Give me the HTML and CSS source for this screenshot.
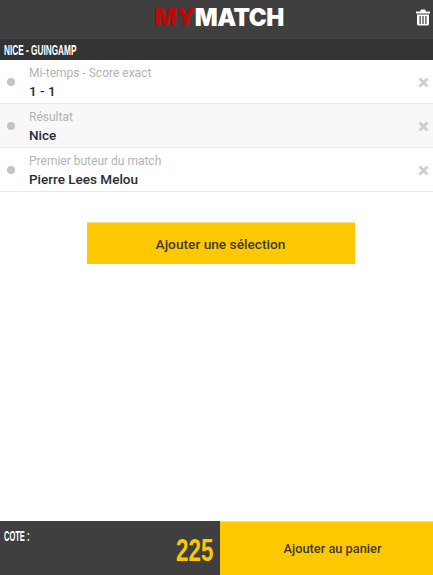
FILE: index.html
```html
<!DOCTYPE html>
<html lang="fr">
<head>
<meta charset="utf-8">
<title>MyMatch</title>
<link rel="stylesheet" href="styles.css">
</head>
<body>
<div class="app">
  <header class="topbar">
    <div class="logo"><span class="logo-my">MY</span>MATCH</div>
    <svg class="trash" viewBox="0 0 14 16" width="14" height="17" aria-hidden="true">
      <path fill="#fff" fill-rule="evenodd" d="M5 0h4l1 2h4v2H0V2h4zM1 5h12v9.500c0 .8-.7 1.500-1.500 1.500h-9C1.700 16 1 15.300 1 14.500zM3.500 6.500v8h1.200v-8zM6.400 6.500v8h1.200v-8zM9.300 6.500v8h1.200v-8z"/>
    </svg>
  </header>
  <div class="match"><span class="cond">NICE - GUINGAMP</span></div>
  <ul class="picks">
    <li class="pick">
      <span class="dot"></span>
      <div class="pick-text"><div class="market">Mi-temps - Score exact</div><div class="choice">1 - 1</div></div>
      <svg class="remove" viewBox="0 0 11 11" width="11" height="11" aria-hidden="true"><path d="M1.500 1.500l8 8M9.500 1.500l-8 8" stroke="#cfcfcf" stroke-width="3" fill="none"/></svg>
    </li>
    <li class="pick alt">
      <span class="dot"></span>
      <div class="pick-text"><div class="market">Résultat</div><div class="choice">Nice</div></div>
      <svg class="remove" viewBox="0 0 11 11" width="11" height="11" aria-hidden="true"><path d="M1.500 1.500l8 8M9.500 1.500l-8 8" stroke="#cfcfcf" stroke-width="3" fill="none"/></svg>
    </li>
    <li class="pick">
      <span class="dot"></span>
      <div class="pick-text"><div class="market">Premier buteur du match</div><div class="choice">Pierre Lees Melou</div></div>
      <svg class="remove" viewBox="0 0 11 11" width="11" height="11" aria-hidden="true"><path d="M1.500 1.500l8 8M9.500 1.500l-8 8" stroke="#cfcfcf" stroke-width="3" fill="none"/></svg>
    </li>
  </ul>
  <div class="add-wrap"><div class="add-btn">Ajouter une sélection</div></div>
  <footer class="footer">
    <div class="odds">
      <div class="odds-label"><span class="cond">COTE :</span></div>
      <div class="odds-value">225</div>
    </div>
    <div class="cart">Ajouter au panier</div>
  </footer>
</div>
</body>
</html>
```

FILE: styles.css
```css
* { box-sizing: border-box; }
html, body { margin: 0; height: 100%; }
body { font-family: "Roboto", sans-serif; background: #fff; color: #2b2b38; }
.app { display: flex; flex-direction: column; height: 575px; width: 433px; overflow: hidden; }
.topbar { position: relative; height: 39px; flex: none; background: #3f3f3f; display: flex; align-items: center; justify-content: center; }
.logo { font-family: "Inter", sans-serif; font-weight: 900; font-size: 24px; line-height: 1; letter-spacing: -0.5px; color: #fff; margin-top: -4px; margin-left: 5px; }
.logo-my { color: #b80b0b; }
.trash { position: absolute; right: 3px; top: 9px; }
.cond { display: inline-block; font-family: "Liberation Sans", sans-serif; font-weight: 700; transform-origin: left center; white-space: nowrap; }
.match { height: 21px; flex: none; background: #333; color: #fff; font-size: 15px; line-height: 21px; padding-left: 4px; }
.match .cond { transform: scaleX(0.55); }
.picks { list-style: none; margin: 0; padding: 0; flex: none; }
.pick { height: 44px; display: flex; align-items: center; border-bottom: 1px solid #e9e9e9; padding-left: 7px; }
.pick.alt { background: #f8f8f8; }
.dot { width: 8px; height: 8px; border-radius: 50%; background: #c4c4c4; flex: none; margin-right: 14px; }
.pick-text { flex: 1; padding-top: 3px; }
.market { font-size: 12px; line-height: 15px; color: #b3b3b3; padding-top: 1px; }
.choice { font-size: 13.500px; line-height: 21px; font-weight: 500; color: #2b2b38; }
.remove { flex: none; margin: 1px 4px 0 0; }
.add-wrap { flex: 1; display: flex; justify-content: center; padding: 30px 0 0 8px; }
.add-btn { width: 268px; height: 42px; background: #fdc800; border-top: 1px solid #f5e08a; color: #3d3a30; font-size: 13.700px; font-weight: 500; display: flex; align-items: center; justify-content: center; }
.footer { height: 54px; flex: none; display: flex; }
.odds { width: 220px; background: #3f3f3f; display: flex; justify-content: space-between; padding: 5px 7px 0 4px; }
.odds-label { color: #fff; font-size: 15px; line-height: 20px; }
.odds-label .cond { transform: scaleX(0.5); }
.odds-value { color: #fdc800; font-family: "Liberation Sans", sans-serif; font-weight: 700; font-size: 32px; line-height: 48px; transform: scaleX(0.7); transform-origin: right center; }
.cart { flex: 1; background: #fdc800; border-top: 1px solid #f5e08a; color: #3d3a30; font-size: 12.800px; font-weight: 500; display: flex; align-items: center; justify-content: center; padding-left: 12px; }
```
